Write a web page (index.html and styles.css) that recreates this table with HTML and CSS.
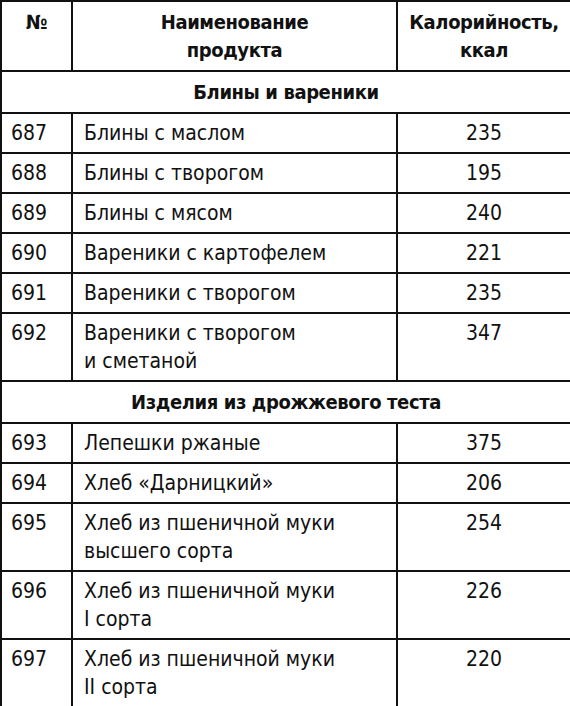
FILE: index.html
```html
<!DOCTYPE html>
<html lang="ru">
<head>
<meta charset="utf-8">
<link rel="stylesheet" href="styles.css">
</head>
<body>
<table class="tbl">
  <colgroup>
    <col class="c-num">
    <col class="c-name">
    <col class="c-cal">
  </colgroup>
  <thead>
    <tr class="head">
      <th>№</th>
      <th>Наименование<br>продукта</th>
      <th>Калорийность,<br>ккал</th>
    </tr>
  </thead>
  <tbody>
    <tr class="section"><td colspan="3">Блины и вареники</td></tr>
    <tr><td class="num">687</td><td class="name">Блины с маслом</td><td class="cal">235</td></tr>
    <tr><td class="num">688</td><td class="name">Блины с творогом</td><td class="cal">195</td></tr>
    <tr><td class="num">689</td><td class="name">Блины с мясом</td><td class="cal">240</td></tr>
    <tr><td class="num">690</td><td class="name">Вареники с картофелем</td><td class="cal">221</td></tr>
    <tr><td class="num">691</td><td class="name">Вареники с творогом</td><td class="cal">235</td></tr>
    <tr class="tall"><td class="num">692</td><td class="name">Вареники с творогом<br>и сметаной</td><td class="cal">347</td></tr>
    <tr class="section"><td colspan="3">Изделия из дрожжевого теста</td></tr>
    <tr><td class="num">693</td><td class="name">Лепешки ржаные</td><td class="cal">375</td></tr>
    <tr><td class="num">694</td><td class="name">Хлеб «Дарницкий»</td><td class="cal">206</td></tr>
    <tr class="tall"><td class="num">695</td><td class="name">Хлеб из пшеничной муки<br>высшего сорта</td><td class="cal">254</td></tr>
    <tr class="tall"><td class="num">696</td><td class="name">Хлеб из пшеничной муки<br>I сорта</td><td class="cal">226</td></tr>
    <tr class="tall"><td class="num">697</td><td class="name">Хлеб из пшеничной муки<br>II сорта</td><td class="cal">220</td></tr>
  </tbody>
</table>
</body>
</html>
```
FILE: styles.css
```css
html, body {
  margin: 0;
  padding: 0;
  background: #fff;
}

body {
  font-family: "DejaVu Sans Condensed", "Liberation Sans Narrow", "Liberation Sans", sans-serif;
  font-size: 21px;
  line-height: 28px;
  color: #111;
}

.tbl {
  width: 570px;
  border-collapse: collapse;
  table-layout: fixed;
}

.c-num { width: 71px; }
.c-name { width: 325px; }
.c-cal { width: 174px; }

.tbl th,
.tbl td {
  border: 2px solid #111;
  vertical-align: top;
}

.head th {
  font-weight: bold;
  font-size: 20px;
  letter-spacing: -0.4px;
  text-align: center;
  padding: 6px 2px 6px;
  height: 56px;
}

.section td {
  font-weight: bold;
  font-size: 20px;
  letter-spacing: -0.4px;
  text-align: center;
  padding: 6px 4px 6px;
  height: 28px;
}

.num {
  padding: 5px 0 5px 9px;
  height: 28px;
}

.name {
  padding: 5px 0 5px 11px;
}

.cal {
  padding: 5px 0 5px;
  text-align: center;
}

.tall .num {
  padding-bottom: 4px;
}
```
